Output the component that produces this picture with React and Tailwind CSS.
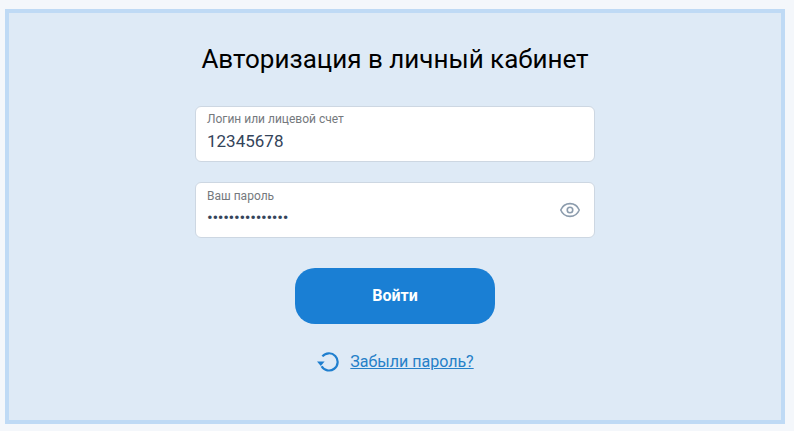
import React from 'react';
import { Eye } from 'lucide-react';

const Field = ({ label, children, right, labelClass = 'pt-0' }) => (
  <div className="relative h-[56px] w-[400px] rounded-[6px] border border-[#cdd7e2] bg-white pl-[11px] pt-[3px]">
    <div className={`text-[12px] leading-[18px] text-[#75797d] ${labelClass}`}>{label}</div>
    {children}
    {right}
  </div>
);

const App = () => {
  return (
    <div className="h-[431px] w-[794px] overflow-hidden bg-[#f4f7fb] pl-[5px] pr-[9px] pt-[9px] pb-[7px] font-['Roboto',sans-serif]">
      <div className="flex h-full flex-col items-center border-[4px] border-[#bfdaf5] bg-[#deeaf6]">
        <h1 className="mt-[28px] text-[26px] leading-[36px] text-black">Авторизация в личный кабинет</h1>
        <div className="mt-[29px] flex flex-col gap-[20px]">
          <Field label="Логин или лицевой счет">
            <div className="mt-[1px] text-[17px] leading-[24px] text-[#34445a]">12345678</div>
          </Field>
          <Field
            label="Ваш пароль"
            labelClass="pt-px"
            right={<Eye size={22} strokeWidth={1.75} className="absolute right-[13px] top-[16px] text-[#8c9cad]" />}
          >
            <div className="text-[17px] leading-[24px] tracking-[-0.33px] text-[#34445a]">•••••••••••••••</div>
          </Field>
        </div>
        <button className="mt-[30px] h-[56px] w-[200px] rounded-[20px] bg-[#1a7fd4] text-[16px] font-bold text-white">Войти</button>
        <div className="mt-[27px] flex items-center gap-[11px] pl-[1px]">
          <svg width="22" height="22" viewBox="0 0 22 22" fill="none" stroke="#1f7fcf" strokeWidth="2.2">
            <path d="M5.4 5.4A8.6 8.6 0 1 1 4.6 15.2" />
            <path d="M0 10.4h7.6L3.8 15z" fill="#1f7fcf" stroke="none" />
          </svg>
          <a href="#" className="text-[16px] leading-[22px] text-[#2580c8] underline">Забыли пароль?</a>
        </div>
      </div>
    </div>
  );
};

export default App;
